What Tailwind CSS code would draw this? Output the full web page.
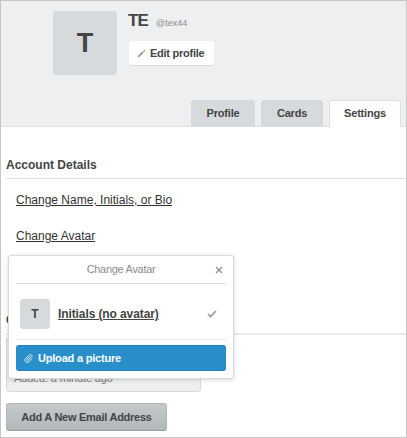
<!DOCTYPE html>
<html lang="en">
<head>
<meta charset="utf-8">
<title>Account settings</title>
<script src="https://cdn.jsdelivr.net/npm/@tailwindcss/browser@4"></script>
</head>
<body class="font-['Liberation_Sans',Arial,sans-serif] text-[#444] bg-white">
<div class="relative w-[407px] h-[438px] border border-[#c5c5c5] overflow-hidden bg-white">
  <header class="h-[126px] bg-[#edeff0] border-b border-[#dcdfe0] flex flex-col justify-between">
    <div class="flex pl-[52px] pt-[10px]">
      <div class="w-16 h-16 rounded-[3px] bg-[#d6dadc] flex items-center justify-center text-[27px] font-bold leading-none">T</div>
      <div class="pl-[11px]">
        <div class="flex items-baseline leading-[20px] h-[30px]">
          <h1 class="text-[17px] font-bold w-[28px] tracking-[-0.8px]">TE</h1>
          <span class="text-[9px] text-[#8c8c8c]">@tex44</span>
        </div>
        <button class="flex items-center h-[25px] w-[85px] pl-2 bg-white rounded-[3px] border-b border-[#d6dadc] text-[11px] font-bold whitespace-nowrap ml-[1px] tracking-[-0.25px]">
          <svg class="w-[9px] h-[9px] mr-[4px]" viewBox="0 0 9 9" fill="#999"><path d="M.5 8.500l.7-2L5.700 2 7 3.300 2.500 7.800zM6.200 1.500l.9-.9 1.300 1.300-.9.9z"/></svg>Edit profile
        </button>
      </div>
    </div>
    <nav class="flex justify-end gap-[6px] pr-[5px] text-[11px] font-bold leading-[27px] text-center -mb-px tracking-[-0.2px]">
      <a class="w-[64px] h-[26px] bg-[#d6dadc] rounded-t-[3px]">Profile</a>
      <a class="w-[62px] h-[26px] bg-[#d6dadc] rounded-t-[3px]">Cards</a>
      <a class="w-[72px] h-[27px] bg-white border border-b-0 border-[#dcdfe0] rounded-t-[3px] leading-[25px]">Settings</a>
    </nav>
  </header>
  <main class="pl-[5px]">
    <h2 class="h-[52px] pt-[29px] border-b border-[#dcdfe0] text-[12px] leading-[18px] font-bold">Account Details</h2>
    <div class="pl-[10px] pt-[12px] text-[12px] leading-[18px] text-[#333]">
      <p><a class="underline">Change Name, Initials, or Bio</a></p>
      <p class="mt-[18px]"><a class="underline">Change Avatar</a></p>
    </div>
    <h2 class="mt-[66px] h-[24px] border-b-2 border-[#e9ebec] text-[12px] leading-[18px] font-bold">C</h2>
    <div class="w-[195px] h-[55px] mt-[2px] bg-[#edeff0] border border-[#d6dadc] rounded-[3px] pl-[7px] pt-[33px] text-[11px] leading-[14px] text-[#7c7c7c] tracking-[-0.15px]">Added: a minute ago</div>
    <button class="mt-[11px] w-[161px] h-[28px] rounded-[3px] border border-[#b1b6b9] border-b-[#969b9e] bg-linear-to-b from-[#c4c9cc] to-[#b2b7ba] text-[11px] font-bold whitespace-nowrap text-[#444] tracking-[-0.26px]">Add A New Email Address</button>
  </main>
  <section class="absolute left-[7px] top-[254px] w-[226px] h-[124px] bg-white border border-[#d8dadb] rounded-[3px] px-[7px] shadow-[0_1px_4px_rgba(0,0,0,0.16)]">
    <div class="flex items-center h-[28px] border-b border-[#dcdfe0] text-[11px] text-[#8c8c8c] tracking-[-0.3px]">
      <span class="flex-1 text-center pl-[11px]">Change Avatar</span>
      <svg class="w-[8px] h-[8px] mr-[3px]" viewBox="0 0 8 8" fill="none" stroke="#8c8c8c" stroke-width="1.300"><path d="M1 1l6 6M7 1L1 7"/></svg>
    </div>
    <div class="flex items-center h-[56px] pl-[4px] pt-[5px] border-b border-[#e4e6e7]">
      <div class="w-[30px] h-[30px] rounded-[3px] bg-[#d6dadc] text-[12px] font-bold flex items-center justify-center">T</div>
      <a class="ml-[8px] text-[12px] font-bold underline flex-1 whitespace-nowrap tracking-[-0.1px]">Initials (no avatar)</a>
      <svg class="w-[10px] h-[8px] mr-[9px]" viewBox="0 0 10 8" fill="none" stroke="#999" stroke-width="1.700"><path d="M1 4l2.600 2.600L9 1"/></svg>
    </div>
    <button class="mt-[5px] flex items-center w-full h-[26px] pl-[8px] rounded-[3px] bg-[#298fca] border-y border-[#1f83bd] text-white text-[11px] font-bold tracking-[-0.2px]">
      <svg class="w-[9px] h-[9px] mr-[5px]" viewBox="0 0 12 12" fill="none" stroke="#fff" stroke-width="1.100" stroke-linecap="round"><path d="M7.500 3.500L4 7c-1 1 .5 2.500 1.500 1.500l4.500-4.500c2-2-1-4.500-3-2.500L2 6c-3 3 1.500 7 4.500 4.500L10.500 6.500"/></svg>Upload a picture
    </button>
  </section>
</div>
</body>
</html>
